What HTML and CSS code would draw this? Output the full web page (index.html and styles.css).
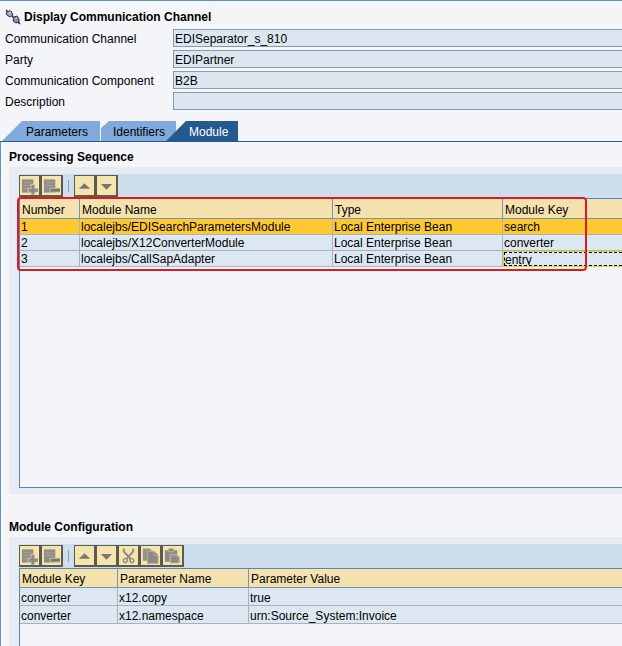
FILE: index.html
```html
<!DOCTYPE html>
<html lang="en">
<head>
  <meta charset="UTF-8">
  <meta name="viewport" content="width=device-width, initial-scale=1.0">
  <title>Display Communication Channel</title>
  <link rel="stylesheet" href="styles.css">
</head>
<body>

  <!-- Shared icons -->
  <svg class="icon-defs" width="0" height="0">
    <symbol id="icon-add" viewBox="0 0 18 18">
      <path d="M1 2h12v14H1z" fill="#8f8e88"/>
      <path d="M3 5.500h8M3 8.500h6M3 11.500h4" stroke="#aaa697"/>
      <path d="M10 7h5v4h3v5h-3v2h-5v-2H7v-5h3z" fill="#d5caa4"/>
      <path d="M11 8h3v4h4v3h-4v3h-3v-3H8v-3h3z" fill="#8b8a83"/>
    </symbol>
    <symbol id="icon-remove" viewBox="0 0 18 18">
      <path d="M1 2h12v14H1z" fill="#8f8e88"/>
      <path d="M3 5.500h8M3 8.500h8" stroke="#aaa697"/>
      <path d="M7 11h11v5H7z" fill="#c9bf9c"/>
      <path d="M8 12h10v3H8z" fill="#777770"/>
    </symbol>
    <symbol id="icon-up" viewBox="0 0 18 18">
      <path d="M9 6l6 6H3z" fill="#77766f"/>
    </symbol>
    <symbol id="icon-down" viewBox="0 0 18 18">
      <path d="M3 7h12l-6 6z" fill="#77766f"/>
    </symbol>
    <symbol id="icon-cut" viewBox="0 0 18 18">
      <path d="M4 1v3l7 8M14 1v3l-7 8" fill="none" stroke="#8b8a83" stroke-width="2"/>
      <path d="M5.500 11.500a2 2.300 0 1 0 .1 0zM12.500 11.500a2 2.300 0 1 0 .1 0z" fill="none" stroke="#8b8a83" stroke-width="1.500"/>
    </symbol>
    <symbol id="icon-copy" viewBox="0 0 18 18">
      <path d="M1 1h7l3 3v10H1z" fill="#96948a"/>
      <path d="M6 4h7l4 4v9H6z" fill="#8b8a83" stroke="#b5ae91"/>
      <path d="M12.500 4v4.500H17" fill="none" stroke="#b5ae91"/>
    </symbol>
    <symbol id="icon-paste" viewBox="0 0 18 18">
      <path d="M1 3h4V1h5v2h4v12H1z" fill="#8b8a83"/>
      <path d="M4 4.500h7" stroke="#c9bf9c"/>
      <path d="M6.500 7.500h7l3 3v6h-10z" fill="#96948a" stroke="#c9bf9c"/>
      <path d="M8 11.500h5M8 14.500h6" stroke="#77766f"/>
    </symbol>
  </svg>

  <header class="channel">
    <h1 class="channel-title">
      <svg width="16" height="16" viewBox="0 0 16 16">
        <path d="M1 1l2 2M12 12l3 3M7 7l2 2" stroke="#252535" stroke-width="1.500"/>
        <path d="M6 2l2 4-3 2-3-2-1-2 3-2z" fill="#9da6cb" stroke="#303044"/>
        <path d="M9 8l3-1 2 3v3l-3 1-3-2z" fill="#858db4" stroke="#303044"/>
        <path d="M3.500 4l2-1M10 10l2-1" stroke="#d5daea"/>
      </svg>
      Display Communication Channel
    </h1>
    <form class="channel-form">
      <label for="channel">Communication Channel</label>
      <input type="text" id="channel" value="EDISeparator_s_810" readonly>
      <label for="party">Party</label>
      <input type="text" id="party" value="EDIPartner" readonly>
      <label for="component">Communication Component</label>
      <input type="text" id="component" value="B2B" readonly>
      <label for="description">Description</label>
      <input type="text" id="description" value="" readonly>
    </form>
  </header>

  <nav class="tabs">
    <button type="button" class="tab tab-first">Parameters</button>
    <button type="button" class="tab tab-middle">Identifiers</button>
    <button type="button" class="tab tab-active">Module</button>
  </nav>

  <main class="tab-panel">
    <h2>Processing Sequence</h2>
    <section class="group">
      <div class="toolbar">
        <button type="button" aria-label="Add"><svg><use href="#icon-add"/></svg></button>
        <button type="button" aria-label="Remove"><svg><use href="#icon-remove"/></svg></button>
        <span class="separator"></span>
        <button type="button" aria-label="Move up"><svg><use href="#icon-up"/></svg></button>
        <button type="button" aria-label="Move down"><svg><use href="#icon-down"/></svg></button>
      </div>
      <div class="grid-area sequence">
        <table>
          <colgroup>
            <col class="col-number">
            <col class="col-name">
            <col class="col-type">
            <col>
          </colgroup>
          <thead>
            <tr><th>Number</th><th>Module Name</th><th>Type</th><th>Module Key</th></tr>
          </thead>
          <tbody>
            <tr class="selected"><td>1</td><td>localejbs/EDISearchParametersModule</td><td>Local Enterprise Bean</td><td>search</td></tr>
            <tr><td>2</td><td>localejbs/X12ConverterModule</td><td>Local Enterprise Bean</td><td>converter</td></tr>
            <tr><td>3</td><td>localejbs/CallSapAdapter</td><td>Local Enterprise Bean</td><td class="focused"><div>entry</div></td></tr>
          </tbody>
        </table>
        <div class="highlight"></div>
      </div>
    </section>

    <h2 class="config-title">Module Configuration</h2>
    <section class="group group-fill">
      <div class="toolbar">
        <button type="button" aria-label="Add"><svg><use href="#icon-add"/></svg></button>
        <button type="button" aria-label="Remove"><svg><use href="#icon-remove"/></svg></button>
        <span class="separator"></span>
        <button type="button" aria-label="Move up"><svg><use href="#icon-up"/></svg></button>
        <button type="button" aria-label="Move down"><svg><use href="#icon-down"/></svg></button>
        <button type="button" aria-label="Cut"><svg><use href="#icon-cut"/></svg></button>
        <button type="button" aria-label="Copy"><svg><use href="#icon-copy"/></svg></button>
        <button type="button" aria-label="Paste"><svg><use href="#icon-paste"/></svg></button>
      </div>
      <div class="grid-area config">
        <table>
          <colgroup>
            <col class="col-key">
            <col class="col-param">
            <col>
          </colgroup>
          <thead>
            <tr><th>Module Key</th><th>Parameter Name</th><th>Parameter Value</th></tr>
          </thead>
          <tbody>
            <tr><td>converter</td><td>x12.copy</td><td>true</td></tr>
            <tr><td>converter</td><td>x12.namespace</td><td>urn:Source_System:Invoice</td></tr>
          </tbody>
        </table>
      </div>
    </section>
  </main>

</body>
</html>
```
FILE: styles.css
```css
* {
  box-sizing: border-box;
}
body {
  margin: 0;
  min-height: 100vh;
  display: flex;
  flex-direction: column;
  font-family: "Liberation Sans", Arial, sans-serif;
  font-size: 12px;
  color: #000;
  background-color: #f3f5f9;
  border-top: 1px solid #6a8fb9;
}
button, input {
  font: inherit;
}
h1, h2 {
  margin: 0;
  font-size: 12px;
  font-weight: bold;
}
.icon-defs {
  position: absolute;
}

/* Channel header */
.channel {
  padding: 7px 0 0 5px;
}
.channel-title {
  display: flex;
  align-items: center;
  gap: 3px;
  height: 18px;
}
.channel-form {
  display: grid;
  grid-template-columns: 168px 1fr;
  row-gap: 3px;
  align-items: center;
  margin-top: 3px;
}
.channel-form label {
  padding-top: 2px;
}
.channel-form input {
  width: 100%;
  height: 18px;
  padding: 2px 1px 0;
  border: 1px solid #8b98a5;
  border-right: 0;
  border-radius: 0;
  background-color: #dce6f1;
}

/* Tabs */
.tabs {
  display: flex;
  height: 20px;
  margin-top: 11px;
  padding-left: 2px;
}
.tab {
  border: 0;
  padding: 2px 0 0;
  text-align: left;
  background-color: #7faadb;
}
.tab-first {
  width: 98px;
  padding-left: 24px;
  clip-path: polygon(20px 0, 100% 0, 100% 100%, 0 100%);
}
.tab-middle {
  width: 75px;
  margin-left: 1px;
  padding-left: 12px;
  clip-path: polygon(8px 0, 100% 0, 100% 100%, 0 100%, 0 7px);
}
.tab-active {
  width: 72px;
  margin-left: -10px;
  padding-left: 23px;
  color: #fff;
  background-color: #245a90;
  clip-path: polygon(20px 0, 100% 0, 100% 100%, 0 100%);
}
.tab-panel {
  flex: 1;
  display: flex;
  flex-direction: column;
  padding: 6px 0 0 8px;
  border-top: 1px solid #245a90;
  border-left: 1px solid #6a8fb9;
}
.tab-panel h2 {
  height: 19px;
  line-height: 18px;
}
.tab-panel .config-title {
  margin-top: 24px;
}

/* Groups with toolbar and table */
.group {
  padding: 7px 0 6px 10px;
  background-color: #e7ebf2;
}
.group-fill {
  flex: 1;
  display: flex;
  flex-direction: column;
  padding-bottom: 0;
}
.toolbar {
  display: flex;
  align-items: flex-start;
  height: 24px;
  padding-top: 1px;
  background-color: #cfdeed;
}
.toolbar button {
  display: flex;
  width: 22px;
  height: 22px;
  padding: 1px;
  border: 1px solid #5c5b50;
  border-right-width: 2px;
  border-bottom-width: 2px;
  background-color: #f6e4ae;
}
.toolbar svg {
  width: 18px;
  height: 18px;
}
.separator {
  width: 1px;
  height: 12px;
  margin: 5px 5px 0;
  background-color: #849cb5;
}
.grid-area {
  position: relative;
  border: 1px solid #5a85b5;
  border-right: 0;
  background-color: #f3f5f9;
}
.sequence {
  height: 290px;
}
.config {
  flex: 1;
  border-bottom: 0;
}
table {
  width: 100%;
  table-layout: fixed;
  border-collapse: separate;
  border-spacing: 0;
}
.col-number {
  width: 60px;
}
.col-name {
  width: 253px;
}
.col-type {
  width: 170px;
}
.col-key {
  width: 98px;
}
.col-param {
  width: 131px;
}
th, td {
  height: 16px;
  padding: 1px 1px 0;
  text-align: left;
  line-height: 14px;
  white-space: nowrap;
  border-right: 1px solid #a9b3c0;
  border-bottom: 1px solid #a9b3c0;
}
th {
  height: 20px;
  padding-top: 2px;
  padding-left: 2px;
  font-weight: normal;
  background-color: #f4e1ad;
  border-color: #6d96bd;
}
th:last-child, td:last-child {
  border-right: 0;
}
td {
  background-color: #dce7f2;
}
.config th {
  height: 19px;
}
.config td {
  height: 18px;
  padding-top: 2px;
}
.selected td {
  background-color: #ffc830;
}
td.focused {
  padding: 0;
  border: 1px solid #dcdc28;
  border-right: 0;
}
.focused div {
  height: 14px;
  line-height: 14px;
  border: 1px dashed #000;
  border-right: 0;
  overflow: hidden;
}

/* Red frame round the module rows */
.highlight {
  position: absolute;
  top: -2px;
  left: -3px;
  width: 570px;
  height: 74px;
  border: 2px solid #e01820;
  border-radius: 4px;
}
```
